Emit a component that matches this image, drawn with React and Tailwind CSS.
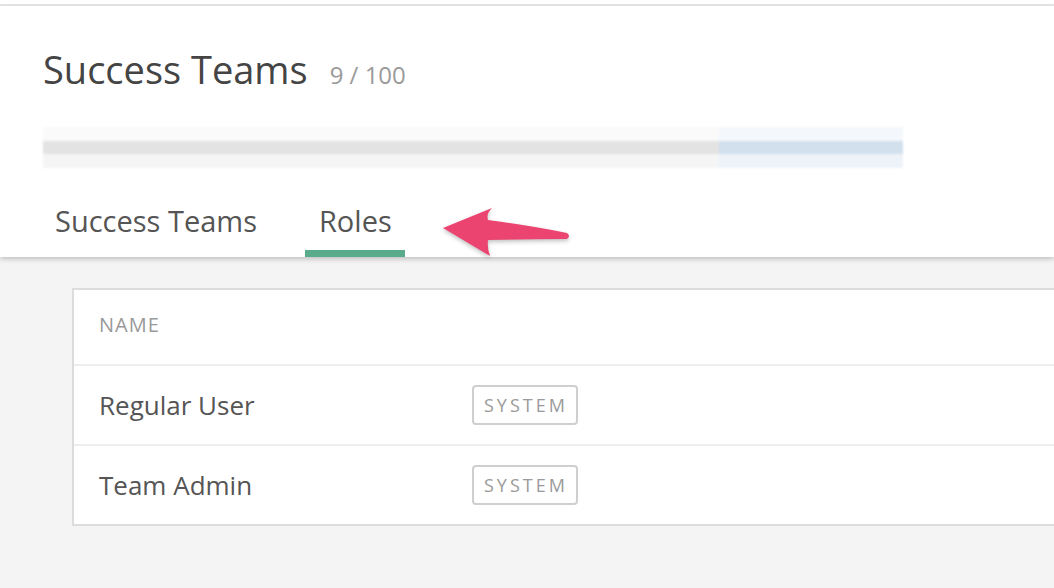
import { useState } from 'react'

const ROLES = [
  { id: 'regular', name: 'Regular User', badge: 'SYSTEM' },
  { id: 'admin', name: 'Team Admin', badge: 'SYSTEM' },
]

const TABS = ['Success Teams', 'Roles']

// Annotation arrow drawn over the header (points at the Roles tab)
function PointerArrow() {
  return (
    <svg
      className="absolute z-20 left-[438px] top-[204px] drop-shadow-[0_2px_2px_rgba(0,0,0,0.25)]"
      width="140"
      height="56"
      viewBox="0 0 140 56"
    >
      <path
        d="M5 24 L54 4 Q48 10 50 16 Q95 22 129 29 Q133 32 129 35 Q95 35 50 36 Q49 44 52 52 Z"
        fill="#ec4470"
      />
    </svg>
  )
}

function BlurredLine() {
  return (
    <div className="mt-[34px] ml-[43px] w-[860px] h-[41px] flex flex-col blur-[1px]">
      <div className="h-[14px] flex">
        <div className="w-[676px] bg-[#fafafa]" />
        <div className="flex-1 bg-[#f4f7fb]" />
      </div>
      <div className="h-[13px] flex">
        <div className="w-[676px] bg-[#e3e3e3]" />
        <div className="flex-1 bg-[#d2e0ee]" />
      </div>
      <div className="h-[14px] flex">
        <div className="w-[676px] bg-[#f5f5f5]" />
        <div className="flex-1 bg-[#eef3f9]" />
      </div>
    </div>
  )
}

export default function App() {
  const [tab, setTab] = useState('Roles')

  return (
    <div className="relative w-[1054px] h-[588px] overflow-hidden bg-[#f4f4f4] font-['Open_Sans',sans-serif]">
      <div className="h-[4px] bg-white" />
      <div className="h-[2px] bg-[#e8e8e8]" />
      <header className="relative z-10 bg-white h-[251px] shadow-[0_2px_5px_rgba(0,0,0,0.22)]">
        <div className="pt-[40px] pl-[43px] flex items-baseline gap-[22px]">
          <h1 className="text-[38px] leading-[46px] text-[#444]">Success Teams</h1>
          <span className="text-[24px] text-[#9a9a9a]">9 / 100</span>
        </div>
        <BlurredLine />
        <nav className="absolute left-[33px] bottom-0 flex gap-[18px]">
          {TABS.map((t) => (
            <button
              key={t}
              type="button"
              onClick={() => setTab(t)}
              className={`relative h-[64px] px-[22px] pb-[8px] text-[29px] text-[#555] ${
                tab === t ? 'after:absolute after:left-[8px] after:right-[9px] after:bottom-0 after:h-[7px] after:bg-[#5aab8c]' : ''
              }`}
            >
              {t}
            </button>
          ))}
        </nav>
      </header>

      <PointerArrow />

      <div className="pt-[31px] pl-[72px]">
        <div className="bg-white border-2 border-r-0 border-[#dcdcdc]">
          <div className="h-[74px] pb-[5px] flex items-center pl-[25px] text-[20px] text-[#999] tracking-[1px]">NAME</div>
          {ROLES.map((r) => (
            <div key={r.id} className="h-[80px] border-t-2 border-[#eeeeee] flex items-center pl-[25px]">
              <span className="w-[373px] text-[26px] text-[#555]">{r.name}</span>
              <span className="h-[40px] pl-[10px] pr-[8px] flex items-center rounded-[4px] border-2 border-[#cfcfcf] text-[18px] tracking-[3px] text-[#9a9a9a]">
                {r.badge}
              </span>
            </div>
          ))}
        </div>
      </div>
    </div>
  )
}
